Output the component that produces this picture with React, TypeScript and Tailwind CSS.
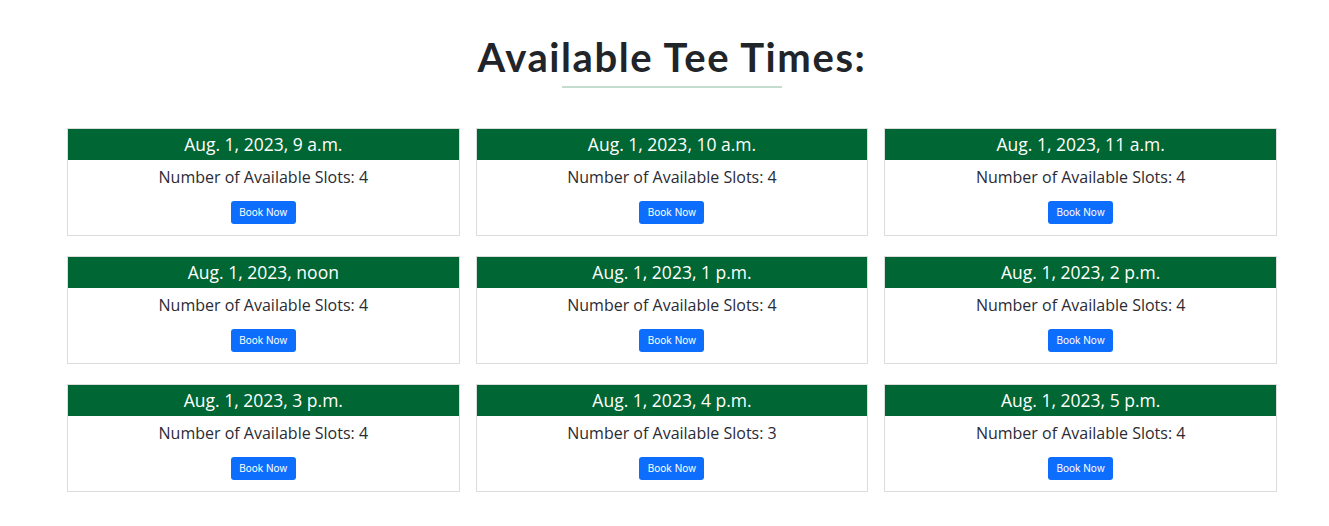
import React from "react";

const slots = [
  { t: "Aug. 1, 2023, 9 a.m.", n: 4 },
  { t: "Aug. 1, 2023, 10 a.m.", n: 4 },
  { t: "Aug. 1, 2023, 11 a.m.", n: 4 },
  { t: "Aug. 1, 2023, noon", n: 4 },
  { t: "Aug. 1, 2023, 1 p.m.", n: 4 },
  { t: "Aug. 1, 2023, 2 p.m.", n: 4 },
  { t: "Aug. 1, 2023, 3 p.m.", n: 4 },
  { t: "Aug. 1, 2023, 4 p.m.", n: 3 },
  { t: "Aug. 1, 2023, 5 p.m.", n: 4 },
];

export default function App() {
  return (
    <div className="min-h-[526px] bg-white font-['Open_Sans',sans-serif]">
      <div className="flex flex-col items-center pt-[33px]">
        <h1 className="text-[40px] leading-[48px] font-bold text-[#212529] font-['Lato',sans-serif] tracking-[1.6px] ml-[15px]">
          Available Tee Times:
        </h1>
        <div className="w-[220px] h-[2px] bg-[#c3dccd] mt-[5px] ml-[15px]" />
      </div>
      <div className="ml-[67px] w-[1210px] mt-[40px] grid grid-cols-3 gap-x-[16px] gap-y-[20px]">
        {slots.map((s, i) => (
          <div key={i} className="border border-[#dcdcdc] h-[108px] flex flex-col">
            <div className="bg-[#006633] text-white text-[17.5px] font-medium h-[31px] leading-[31px] text-center">
              {s.t}
            </div>
            <div className="flex flex-col items-center">
              <div className="text-[16px] leading-[24px] text-[#2b2b33] mt-[5px]">
                Number of Available Slots: {s.n}
              </div>
              <button className="mt-[12px] w-[65px] h-[23px] bg-[#0d6efd] text-white text-[10px] rounded-[3px] font-['Inter',sans-serif] font-normal">
                Book Now
              </button>
            </div>
          </div>
        ))}
      </div>
    </div>
  );
}
